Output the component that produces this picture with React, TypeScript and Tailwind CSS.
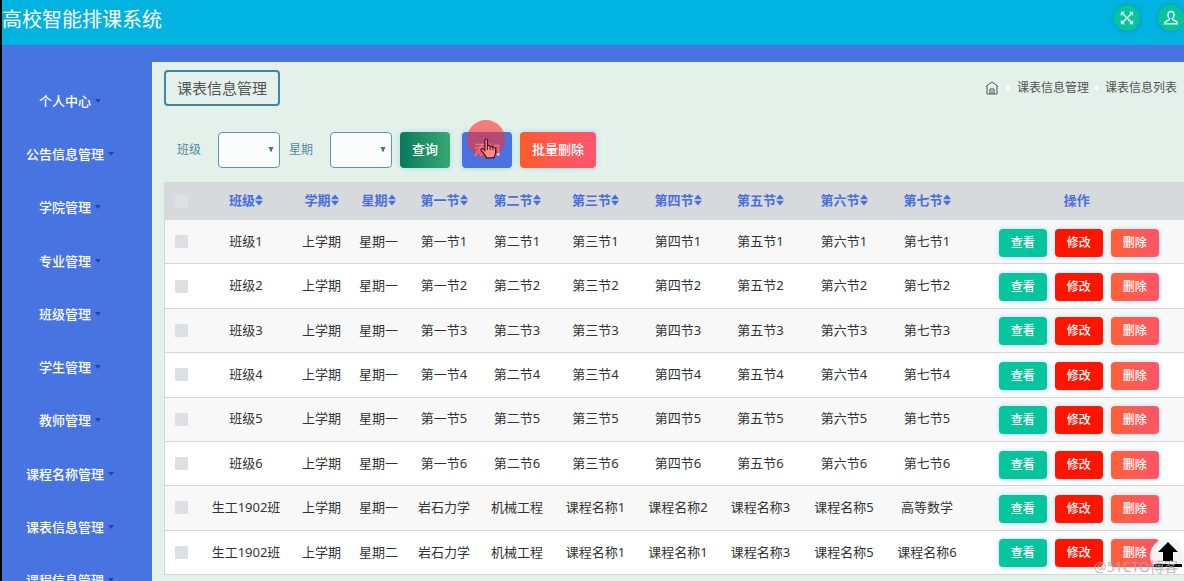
const menuItems = [
    '个人中心',
    '公告信息管理',
    '学院管理',
    '专业管理',
    '班级管理',
    '学生管理',
    '教师管理',
    '课程名称管理',
    '课表信息管理',
    '课程信息管理',
];

const columns = [
    { label: '班级', width: 'w-[93px]' },
    { label: '学期', width: 'w-[58px]' },
    { label: '星期', width: 'w-[56px]' },
    { label: '第一节', width: 'w-[75px]' },
    { label: '第二节', width: 'w-[71px]' },
    { label: '第三节', width: 'w-[86px]' },
    { label: '第四节', width: 'w-[79px]' },
    { label: '第五节', width: 'w-[86px]' },
    { label: '第六节', width: 'w-[81px]' },
    { label: '第七节', width: 'w-[85px]' },
];

const rows = [
    ...[1, 2, 3, 4, 5, 6].map((n) => [
        `班级${n}`, '上学期', '星期一', `第一节${n}`, `第二节${n}`, `第三节${n}`, `第四节${n}`, `第五节${n}`, `第六节${n}`, `第七节${n}`,
    ]),
    ['生工1902班', '上学期', '星期一', '岩石力学', '机械工程', '课程名称1', '课程名称2', '课程名称3', '课程名称5', '高等数学'],
    ['生工1902班', '上学期', '星期二', '岩石力学', '机械工程', '课程名称1', '课程名称1', '课程名称3', '课程名称5', '课程名称6'],
];

const SortIcon = () => (
    <svg viewBox="0 0 8 12" className="inline-block h-3 w-2 align-[-1px]" fill="currentColor">
        <path d="M4 0.5 L8 5.2 H0 Z M4 11.5 L8 6.8 H0 Z" />
    </svg>
);

const HomeIcon = () => (
    <svg viewBox="0 0 14 14" className="size-3.5" fill="none" stroke="currentColor">
        <path d="M0.8 5.6 L7 1 L13.2 5.6 M2 5 V13 H12 V5 M5 13 V8 H9 V13 M7 9.5 V13" />
    </svg>
);

const Header = () => (
    <header className="flex h-[45px] shrink-0 items-start justify-between bg-[#00b3e0]">
        <h1 className="pt-1 text-[20px] leading-8 text-white">高校智能排课系统</h1>
        <div className="flex gap-[18px] pt-[5px]">
            <button aria-label="全屏" className="flex size-[26px] items-center justify-center rounded-full bg-[#06c49b] text-[#e6fbf8] shadow-[0_0_4px_#0a8fb0]">
                <svg viewBox="0 0 14 14" className="size-3.5" fill="currentColor" stroke="currentColor">
                    <path d="M2 2 L12 12 M12 2 L2 12" strokeWidth="1.5" />
                    <path d="M0.8 0.8 H5 L0.8 5 Z M13.2 0.8 V5 L9 0.8 Z M0.8 13.2 V9 L5 13.2 Z M13.2 13.2 H9 L13.2 9 Z" stroke="none" />
                </svg>
            </button>
            <button aria-label="用户" className="flex size-[26px] items-center justify-center rounded-full bg-[#06c49b] text-[#e6fbf8] shadow-[0_0_4px_#0a8fb0]">
                <svg viewBox="0 0 16 16" className="size-4" fill="none" stroke="currentColor" strokeWidth="1.5">
                    <path d="M8 1.5 C5.8 1.5 5 3 5 5 C5 7 6 8.3 6.7 9 C6.5 10.5 2 10 1.7 13.8 H14.3 C14 10 9.5 10.5 9.3 9 C10 8.3 11 7 11 5 C11 3 10.2 1.5 8 1.5 Z" />
                </svg>
            </button>
        </div>
    </header>
);

const Sidebar = () => (
    <nav className="w-[150px] shrink-0 pt-[29px]">
        <ul className="flex h-[533px] flex-col pr-6">
            {menuItems.map((item) => (
                <li key={item} className="flex flex-1 items-center justify-center">
                    <a href="#" className="flex items-center gap-1 text-[13px] leading-5 font-medium text-white">
                        {item}
                        <svg viewBox="0 0 6 4" className="-mr-2.5 h-1 w-1.5 fill-[#22479c]">
                            <path d="M0 0 H6 L3 4 Z" />
                        </svg>
                    </a>
                </li>
            ))}
        </ul>
    </nav>
);

const FilterSelect = ({ id, label }: { id: string; label: string }) => (
    <div className="flex items-center">
        <label htmlFor={id} className="text-[12px] text-[#5589a3]">{label}</label>
        <div className="relative ml-[17px]">
            <select id={id} className="block h-9 w-[62px] appearance-none rounded border border-[#5b95b0] bg-[#fbfdfc]" />
            <svg viewBox="0 0 6 6" className="pointer-events-none absolute top-[15px] right-1.5 size-1.5 fill-[#35708c]">
                <path d="M0.5 0 H5.5 L3 5.5 Z" />
            </svg>
        </div>
    </div>
);

const Pointer = () => (
    <div className="pointer-events-none absolute -top-3 left-[5px] size-[38px] rounded-full bg-[#ff3030]/60">
        <svg viewBox="0 0 16 20" className="absolute top-[18px] left-[13px] h-[21px] w-[17px]">
            <path
                d="M4.5 12 V2 C4.5 0.6 7 0.6 7 2 V7.5 C7.4 6.8 9.4 7 9.6 8.2 C10.2 7.6 12 7.9 12.2 9 C13 8.6 14.8 9 14.8 10.5 V14 C14.8 16 13.5 17 13.2 19 H6 C5.5 16.8 3 14.5 1.2 12 C0.2 10.4 1.8 9.4 3 10.4 Z"
                fill="#ff8d80"
                stroke="#3d1025"
                strokeWidth="1.1"
            />
            <path d="M7 8 V11.5 M9.6 8.5 V11.5 M12.2 9.2 V11.8" stroke="#3d1025" strokeWidth="0.9" />
        </svg>
    </div>
);

const Toolbar = () => (
    <div className="mt-[26px] flex items-center pl-[13px]">
        <FilterSelect id="class" label="班级" />
        <div className="ml-[9px]">
            <FilterSelect id="weekday" label="星期" />
        </div>
        <button className="ml-2 h-9 rounded-sm bg-linear-to-r from-[#067a5c] to-[#35a872] px-3 text-[13px] font-medium text-white shadow-[0_0_6px_#a5dcec]">查询</button>
        <div className="relative ml-3">
            <button className="h-9 rounded-sm bg-[#4a72e0] px-3 text-[13px] font-medium text-[#ffe0f0] shadow-[0_0_6px_#a5dcec]">添加</button>
            <Pointer />
        </div>
        <button className="ml-2 h-9 rounded-sm bg-linear-to-r from-[#ff5a28] to-[#ff5570] px-3 text-[13px] font-medium text-white shadow-[0_0_6px_#a5dcec]">批量删除</button>
    </div>
);

const ScheduleTable = () => (
    <table className="mt-3.5 h-[393px] w-full table-fixed border-collapse border border-r-0 border-[#d3d7d8] text-center text-[13px] text-[#333] [&_td]:p-0 [&_th]:p-0">
        <thead>
            <tr className="h-[37px] bg-[#d6dadd] text-[#4a6fd8]">
                <th className="w-[35px]">
                    <input type="checkbox" aria-label="全选" className="ml-2.5 block size-[13px] appearance-none bg-[#dde1e5]" />
                </th>
                {columns.map((col) => (
                    <th key={col.label} className={`${col.width} font-semibold whitespace-nowrap`}>
                        {col.label}<SortIcon />
                    </th>
                ))}
                <th className="font-semibold">操作</th>
            </tr>
        </thead>
        <tbody>
            {rows.map((row, i) => (
                <tr key={i} className="border-t border-[#d3d5d7] odd:bg-[#f8f8f8] even:bg-white">
                    <td>
                        <input type="checkbox" aria-label={`选择第${i + 1}行`} className="ml-2.5 block size-[13px] appearance-none bg-[#dce0e5]" />
                    </td>
                    {row.map((cell, j) => (
                        <td key={j} className="whitespace-nowrap">{cell}</td>
                    ))}
                    <td>
                        <div className="flex justify-center gap-2 pt-0.5 pl-1 text-[12px] font-medium text-white">
                            <button className="h-7 rounded-sm bg-[#06c49b] px-3 shadow-[0_0_5px_#a8dcf5]">查看</button>
                            <button className="h-7 rounded-sm bg-[#fd1500] px-3 shadow-[0_0_5px_#a8dcf5]">修改</button>
                            <button className="h-7 rounded-sm bg-linear-to-r from-[#ff6035] to-[#ff5568] px-3 shadow-[0_0_5px_#a8dcf5]">删除</button>
                        </div>
                    </td>
                </tr>
            ))}
        </tbody>
    </table>
);

const App = () => {
    return (
        <div className="relative flex h-screen flex-col overflow-hidden border-l-2 border-black bg-[#4874e2] font-['Noto_Sans','Noto_Sans_CJK_SC',sans-serif]">
            <Header />
            <div className="flex min-h-0 flex-1">
                <Sidebar />
                <main className="mt-[17px] min-w-0 flex-1 bg-[#e4f1ea] pt-2 pl-3">
                    <div className="flex items-center justify-between pr-[7px]">
                        <h2 className="rounded-sm border-2 border-[#4482a6] px-[11px] py-1 text-[15px] leading-6 text-[#555]">课表信息管理</h2>
                        <nav className="flex items-center text-[12px] text-[#555]">
                            <a href="#" aria-label="首页"><HomeIcon /></a>
                            <span className="mx-[7px] size-1 rounded-full bg-white" />
                            <a href="#">课表信息管理</a>
                            <span className="mx-1.5 size-1 rounded-full bg-white" />
                            <a href="#">课表信息列表</a>
                        </nav>
                    </div>
                    <Toolbar />
                    <ScheduleTable />
                </main>
            </div>

            <button aria-label="返回顶部" className="absolute right-0 bottom-2 size-[34px] rounded-full bg-[#f5f5f5]">
                <svg viewBox="0 0 34 34" className="size-full">
                    <path d="M18 3 L28 13 H23 V22 H13 V13 H8 Z M4 25 H32 V28 H4 Z" />
                </svg>
            </button>
            <span className="pointer-events-none absolute right-1.5 bottom-1 text-[14px] leading-5 text-[#a8a8a8]/80">@51CTO博客</span>
        </div>
    );
};

export default App;
